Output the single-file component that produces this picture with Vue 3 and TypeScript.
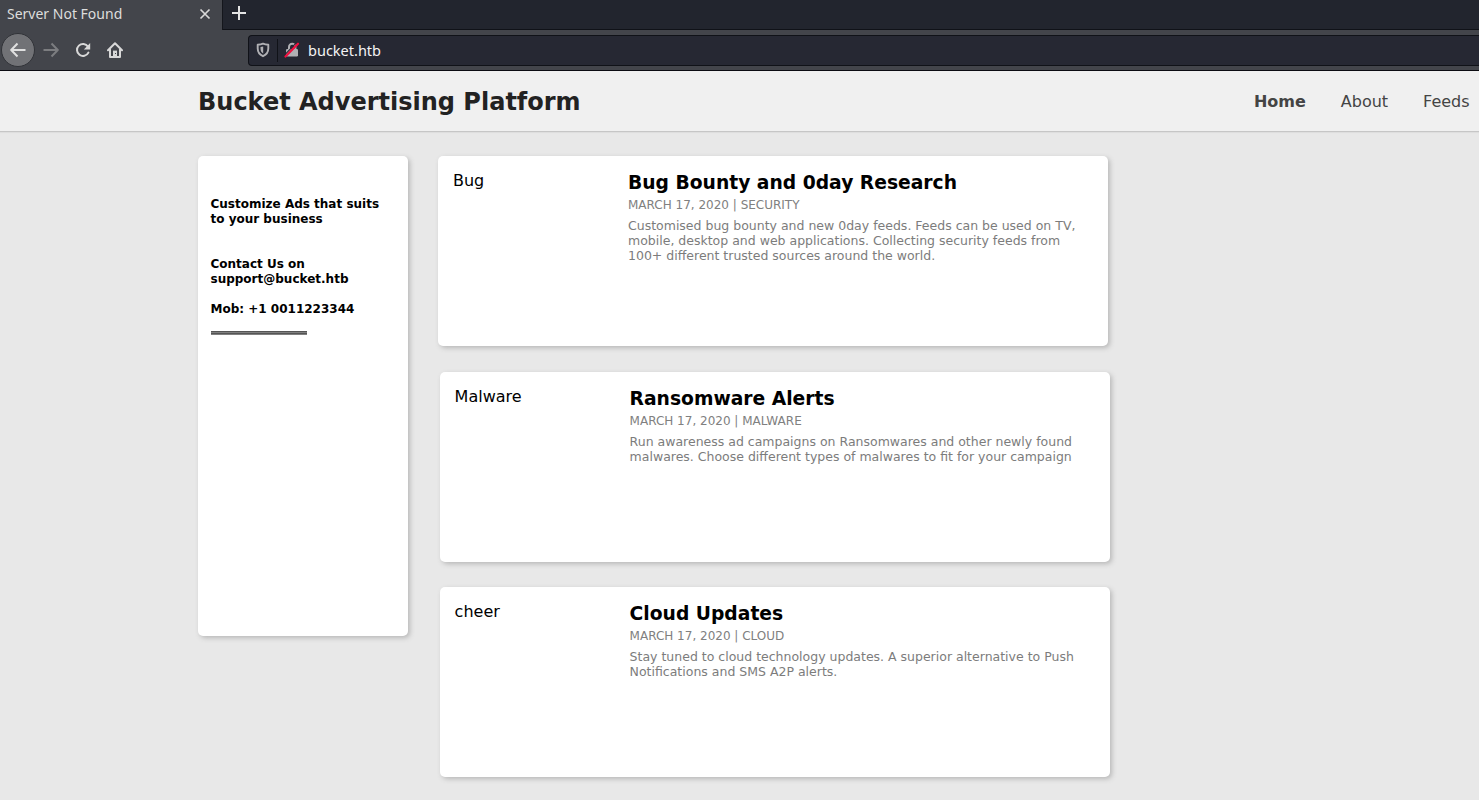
<script setup lang="ts">
interface Ad {
  label: string
  title: string
  meta: string
  lines: string[]
}

const ads: Ad[] = [
  {
    label: 'Bug',
    title: 'Bug Bounty and 0day Research',
    meta: 'MARCH 17, 2020 | SECURITY',
    lines: [
      'Customised bug bounty and new 0day feeds. Feeds can be used on TV,',
      'mobile, desktop and web applications. Collecting security feeds from',
      '100+ different trusted sources around the world.',
    ],
  },
  {
    label: 'Malware',
    title: 'Ransomware Alerts',
    meta: 'MARCH 17, 2020 | MALWARE',
    lines: [
      'Run awareness ad campaigns on Ransomwares and other newly found',
      'malwares. Choose different types of malwares to fit for your campaign',
    ],
  },
  {
    label: 'cheer',
    title: 'Cloud Updates',
    meta: 'MARCH 17, 2020 | CLOUD',
    lines: [
      'Stay tuned to cloud technology updates. A superior alternative to Push',
      'Notifications and SMS A2P alerts.',
    ],
  },
]
</script>

<template>
  <div class="window">
    <div class="tabs">
      <div class="tab">
        <span class="tab-title">Server Not Found</span>
        <svg class="close" width="12" height="12" viewBox="0 0 12 12">
          <path d="M1.5 1.5l9 9M10.5 1.5l-9 9" stroke="#d8d8d8" stroke-width="1.7" fill="none" />
        </svg>
      </div>
      <svg class="plus" width="16" height="16" viewBox="0 0 16 16">
        <path d="M8 1v14M1 8h14" stroke="#e4e4e4" stroke-width="2" fill="none" />
      </svg>
    </div>

    <div class="toolbar">
      <span class="back">
        <svg width="16" height="16" viewBox="0 0 16 16">
          <path d="M15.5 8H1.5M7.5 1.5L1.2 8l6.3 6.5" stroke="#e0e0e0" stroke-width="2" fill="none" stroke-linejoin="round" />
        </svg>
      </span>
      <svg class="tool" width="16" height="16" viewBox="0 0 16 16">
        <path d="M.5 8h14M8.5 1.5L14.8 8l-6.3 6.5" stroke="#7c7d80" stroke-width="2" fill="none" stroke-linejoin="round" />
      </svg>
      <svg class="tool" width="16" height="16" viewBox="0 0 16 16">
        <path d="M13 4.6A6 6 0 1 0 13.4 10.6" stroke="#d8d8d8" stroke-width="2" fill="none" stroke-linecap="round" />
        <path d="M15.2 1v6.4H8.8z" fill="#d8d8d8" />
      </svg>
      <svg class="tool" width="16" height="16" viewBox="0 0 16 16">
        <path d="M1 8.3L8 1.3l7 7M3 7.5v7.500h10V7.500" stroke="#d8d8d8" stroke-width="2" fill="none" stroke-linecap="round" stroke-linejoin="round" />
        <path d="M6 14V8.600h4V14z" fill="#d8d8d8" />
        <path d="M8 11h1v1h-1z" fill="#43454b" />
      </svg>
      <div class="address">
        <svg class="shield" width="14" height="16" viewBox="0 0 14 16">
          <path d="M7 1.600c1.600.7 3.300 1 5.300 1.100v3.800c0 3.700-2 6.100-5.300 7.700-3.300-1.600-5.300-4-5.300-7.700V2.700c2-.1 3.700-.4 5.300-1.100z" stroke="#b0b0b4" stroke-width="1.900" fill="none" stroke-linejoin="round" />
          <path d="M7.200 4.400v7.200C5.200 10.300 4.500 8.700 4.500 6.500V5z" fill="#b0b0b4" />
        </svg>
        <span class="divider"></span>
        <svg class="lock" width="16" height="16" viewBox="0 0 16 16">
          <path d="M5 7.500V5a3.200 3.200 0 0 1 6.400 0v2.500" stroke="#b0b0b4" stroke-width="2" fill="none" />
          <rect x="2" y="7" width="12" height="7.500" rx="1.200" fill="#b0b0b4" />
          <path d="M0 13.500L12.500.7" stroke="#262833" stroke-width="1.200" />
          <path d="M1.500 14.500L14 1.700" stroke="#f0103f" stroke-width="2.200" stroke-linecap="round" />
        </svg>
        <span class="url">bucket.htb</span>
      </div>
    </div>

    <header class="site-header">
      <h1>Bucket Advertising Platform</h1>
      <nav>
        <a class="active">Home</a>
        <a>About</a>
        <a>Feeds</a>
      </nav>
    </header>

    <main>
      <aside>
        <p>Customize Ads that suits<br />to your business</p>
        <p class="contact">Contact Us on<br />support@bucket.htb</p>
        <p class="mobile">Mob: +1 0011223344</p>
        <div class="rule"></div>
      </aside>
      <section class="feed">
        <article v-for="ad in ads" :key="ad.title">
          <div class="label">{{ ad.label }}</div>
          <div class="body">
            <h3>{{ ad.title }}</h3>
            <div class="meta">{{ ad.meta }}</div>
            <div class="description">
              <div v-for="line in ad.lines" :key="line">{{ line }}</div>
            </div>
          </div>
        </article>
      </section>
    </main>
  </div>
</template>

<style>
body {
  margin: 0;
  overflow: hidden;
  background: #e8e8e8;
}
</style>

<style scoped>
.window {
  width: 100%;
  height: 800px;
  overflow: hidden;
  background: #e8e8e8;
  font-family: "DejaVu Sans", sans-serif;
  color: #000;
}
.tabs {
  display: flex;
  height: 30px;
  background: linear-gradient(#22252e 0 29px, #101218 29px);
}
.tab {
  display: flex;
  align-items: center;
  box-sizing: border-box;
  width: 223px;
  height: 30px;
  padding: 0 11px 2px 7px;
  border-right: 1px solid #14161c;
  background: #43454b;
  font: 14px/20px "Noto Sans", sans-serif;
  color: #dddddd;
}
.tab-title {
  flex: 1;
  white-space: nowrap;
}
.plus {
  margin: 5px 0 0 8px;
}
.toolbar {
  display: flex;
  align-items: center;
  box-sizing: border-box;
  height: 41px;
  padding-left: 1px;
  border-bottom: 1px solid #0c0c12;
  background: #43454b;
}
.back {
  display: flex;
  align-items: center;
  justify-content: center;
  box-sizing: border-box;
  width: 34px;
  height: 34px;
  border: 1px solid #313338;
  border-radius: 50%;
  background: #717276;
}
.tool {
  margin-left: 8px;
}
.tool + .tool {
  margin-left: 16px;
}
.address {
  display: flex;
  align-items: center;
  flex: 1;
  box-sizing: border-box;
  height: 31px;
  margin-left: 125px;
  padding-left: 7px;
  border: 1px solid #101218;
  border-right: 0;
  border-radius: 4px 0 0 4px;
  background: #262833;
}
.divider {
  width: 1px;
  height: 23px;
  margin: 0 6px 0 7px;
  background: #101218;
}
.url {
  margin-left: 8px;
  font: 14.5px/20px "Noto Sans", sans-serif;
  color: #f4f4f5;
}
.site-header {
  display: flex;
  align-items: center;
  justify-content: space-between;
  box-sizing: border-box;
  height: 61px;
  padding: 0 9.4px 0 198px;
  border-bottom: 1px solid #c6c6c6;
  background: #f0f0f0;
  box-shadow: 0 1px 1px #dedede;
}
h1 {
  margin: 0;
  padding-top: 2px;
  font-size: 24px;
  line-height: 28px;
  color: #222;
}
nav {
  display: flex;
  gap: 35px;
  font-size: 16px;
  line-height: 19px;
  color: #444;
}
.active {
  font-weight: bold;
}
main {
  display: flex;
  align-items: flex-start;
  gap: 30px;
  padding: 24px 0 0 198px;
}
aside,
article {
  box-sizing: border-box;
  border-radius: 5px;
  background: #fff;
  box-shadow: 2px 2px 5px #b8b8b8;
}
aside {
  width: 210px;
  height: 480px;
  padding: 41px 0 0 12.5px;
  font-size: 12px;
  line-height: 15px;
  font-weight: bold;
}
aside p {
  margin: 0;
}
.contact {
  padding-top: 30px;
}
.mobile {
  padding-top: 15px;
}
.rule {
  box-sizing: border-box;
  width: 96px;
  height: 4px;
  margin: 14px 0 0 .5px;
  background: linear-gradient(#555 0 1px, #808080 1px 2px, #555 2px 3px, #808080 3px);
}
article {
  display: flex;
  width: 670px;
  height: 190px;
  padding: 15px;
}
article + article {
  margin: 26px 0 0 2px;
  padding-left: 14.6px;
}
article:last-child {
  margin-top: 25px;
}
.label {
  width: 175px;
  font-size: 16px;
  line-height: 19px;
}
h3 {
  margin: 0;
  padding-top: 1px;
  font-size: 18.72px;
  line-height: 22px;
}
.meta {
  margin-top: 4px;
  font-size: 12px;
  line-height: 15px;
  color: #808080;
}
.description {
  margin-top: 5px;
  font-size: 12.5px;
  line-height: 15px;
  color: #7c7c7c;
  white-space: nowrap;
}
</style>
